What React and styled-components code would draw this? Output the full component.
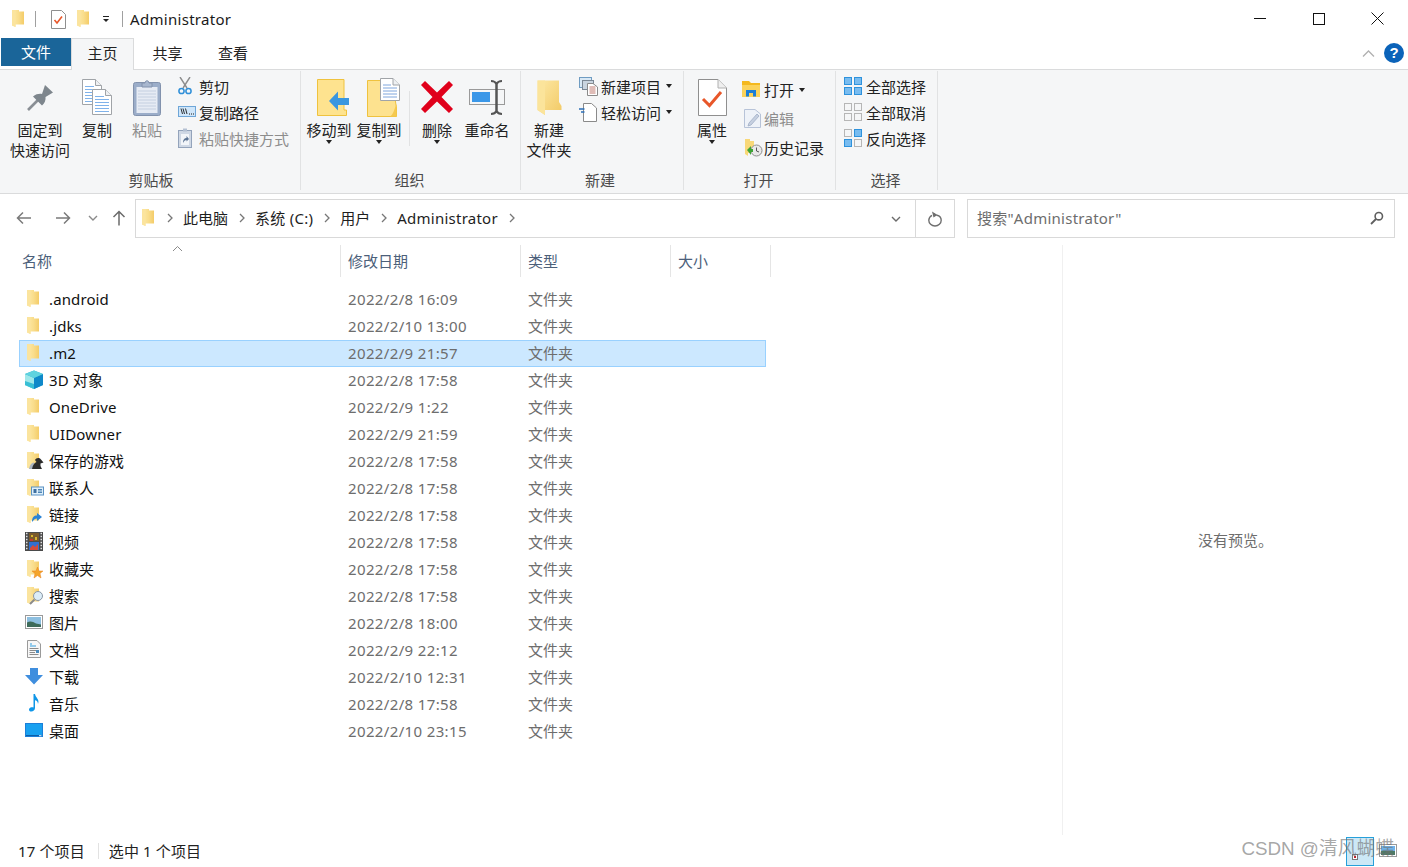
import React, { useId } from "react";
import styled, { createGlobalStyle } from "styled-components";

const Global = createGlobalStyle`
  html, body { margin: 0; padding: 0; background: #fff; overflow: hidden; }
  body { font-family: "Noto Sans", "Noto Sans CJK SC", sans-serif; font-size: 15px; color: #000; }
  * { box-sizing: border-box; }
`;

const Win = styled.div`
  width: 1408px; height: 867px; display: flex; flex-direction: column; position: relative; overflow: hidden; background: #fff;
`;

/* title bar */
const TitleBar = styled.header`height: 38px; display: flex; align-items: center; padding: 0 1px 0 10px;`;
const QuickIcon = styled.span`display: flex; width: ${p => p.$w}px; margin-left: ${p => p.$ml || 0}px; justify-content: center;`;
const TitleSep = styled.i`width: 1px; height: 16px; background: #a0a0a0; margin: 0 ${p => p.$r}px 0 ${p => p.$l}px;`;
const TitleText = styled.span`font-size: 15px; line-height: 20px; flex: 1; color: #1a1a1a; letter-spacing: .3px;`;
const WinBtn = styled.button`
  width: 59px; height: 38px; border: 0; background: none; padding: 0; display: flex; align-items: center; justify-content: center; margin-top: -1px;
`;

/* tabs */
const TabBar = styled.nav`height: 32px; display: flex; align-items: flex-start; padding-left: 1px; position: relative; border-bottom: 1px solid #dadbdc;`;
const FileTab = styled.div`width: 70px; height: 28px; background: #1a6599; color: #fff; display: flex; align-items: center; justify-content: center; font-size: 15px; padding-bottom: 2px;`;
const Tab = styled.div`
  width: ${p => p.$w}px; height: ${p => p.$active ? 32 : 30}px; display: flex; align-items: center; justify-content: center; font-size: 15px; padding-bottom: ${p => p.$active ? 4 : 2}px; color: #222;
  ${p => p.$active && `background: #f5f6f7; border: 1px solid #dadbdc; border-bottom: 0; position: relative; z-index: 1;`}
`;
const TabRight = styled.div`margin-left: auto; display: flex; align-items: center; gap: 9px; padding-right: 4px; height: 30px;`;
const Help = styled.span`
  width: 20px; height: 20px; border-radius: 50%; background: #0b63b9; color: #fff; font: bold 15px/20px "Liberation Sans", sans-serif; text-align: center;
`;

/* ribbon */
const Ribbon = styled.section`height: 124px; display: flex; background: #f5f6f7; border-bottom: 1px solid #dadbdc;`;
const Group = styled.div`
  width: ${p => p.$w}px; height: 119px; margin-top: 1px; border-right: 1px solid #e1e2e3; display: flex; flex-direction: column;
`;
const GroupBody = styled.div`flex: 1; display: flex; padding-left: ${p => p.$pl}px; align-items: flex-start; min-height: 0;`;
const GroupLabel = styled.div`
  height: 20px; line-height: 20px; text-align: center; font-size: 15px; color: #4b4b4b; margin-top: auto;
  padding: 0 ${p => p.$pr || 0}px 0 ${p => p.$pl || 0}px;
`;
const Big = styled.div`
  width: ${p => p.$w}px; margin-left: ${p => p.$ml || 0}px; display: flex; flex-direction: column; align-items: center; padding-top: 7px;
  color: ${p => p.$off ? "#8d8d8d" : "#222"};
`;
const BigIcon = styled.div`height: 38px; display: flex; align-items: center; justify-content: center; padding-left: ${p => p.$shift || 0}px;`;
const BigText = styled.div`margin-top: 4px; font-size: 15px; line-height: 20px; text-align: center; white-space: nowrap;`;
const Caret = styled.i`
  display: block; width: 0; height: 0; border: 3.5px solid transparent; border-top: 4px solid #222; border-bottom: 0; margin: ${p => p.$inline ? "0 0 0 5px" : "0"};
`;
const VRule = styled.i`width: 1px; height: 55px; background: #e1e2e3; margin: 20px 0 0 ${p => p.$ml}px;`;
const SmallList = styled.div`display: flex; flex-direction: column; margin-left: ${p => p.$ml}px; padding-top: ${p => p.$pt ?? 2}px;`;
const SmallItem = styled.div`
  height: ${p => p.$h || 26}px; display: flex; align-items: center; white-space: nowrap; font-size: 15px; color: ${p => p.$off ? "#8d8d8d" : "#222"};
`;
const SmallIcon = styled.span`width: ${p => p.$w || 22}px; padding-left: ${p => p.$pl || 0}px; display: flex; flex: none;`;

/* nav */
const NavBar = styled.div`height: 51px; display: flex; align-items: flex-start; padding: 5px 13px 0 0;`;
const NavButtons = styled.div`width: 135px; height: 38px; display: flex; align-items: center; padding-left: 16px; flex: none;`;
const NavBtn = styled.span`display: flex; margin-right: ${p => p.$mr}px;`;
const Address = styled.div`flex: 1; height: 39px; border: 1px solid #d9d9d9; display: flex; align-items: center; min-width: 0;`;
const Crumbs = styled.div`flex: 1; display: flex; align-items: center; padding: 0 0 2px 3px; color: #1e1e1e; font-size: 15px;`;
const Chev = styled.span`display: flex; margin: 0 ${p => p.$r ?? 10}px 0 ${p => p.$l ?? 11}px;`;
const Latin = styled.span`letter-spacing: .25px;`;
const AddrBtn = styled.span`width: ${p => p.$w}px; height: 37px; display: flex; align-items: center; justify-content: center; flex: none; ${p => p.$line && "border-left: 1px solid #d9d9d9;"}`;
const Search = styled.div`
  width: 428px; height: 39px; margin-left: 12px; border: 1px solid #d9d9d9; display: flex; align-items: center; justify-content: space-between; padding: 0 10px 2px 9px; color: #6d6d6d; font-size: 15px; flex: none; letter-spacing: .25px;
`;

/* main */
const Main = styled.main`height: 590px; display: flex;`;
const ListPane = styled.div`width: 1062px; flex: none; position: relative;`;
const ColHead = styled.div`height: 32px; margin-left: 19px; display: grid; grid-template-columns: 322px 180px 150px 100px; width: 752px;`;
const ColCell = styled.div`
  border-right: 1px solid #e5e5e5; padding: 6px 0 0 ${p => p.$pl || 7}px; font-size: 15px; line-height: 20px; color: #4c607a;
`;
const SortMark = styled.span`position: absolute; left: 172px; top: 0; display: flex;`;
const Rows = styled.div`padding-top: 9px; margin-left: 19px; width: 747px;`;
const Row = styled.div`
  height: 27px; display: grid; grid-template-columns: 329px 180px 1fr; align-items: center; padding-bottom: 2px; border: 1px solid ${p => p.$sel ? "#99d1ff" : "transparent"};
  background: ${p => p.$sel ? "#cce8ff" : "transparent"}; font-size: 15px;
`;
const NameCell = styled.div`display: flex; align-items: center; color: #111; padding-left: 4px; line-height: 20px; letter-spacing: ${p => p.$latin ? ".12px" : "0"};`;
const RowIcon = styled.span`width: 20px; height: 20px; display: flex; margin-right: 5px; flex: none; letter-spacing: 0;`;
const MetaCell = styled.div`color: #6d6d6d; line-height: 20px; font-size: 15px; margin-left: -1px; letter-spacing: ${p => p.$latin ? ".36px" : "0"};`;
const Preview = styled.aside`flex: 1; border-left: 1px solid #f0f0f0; display: flex; align-items: center; justify-content: center; color: #6d6d6d; font-size: 15px; padding-bottom: 2px;`;

/* status */
const Status = styled.footer`height: 32px; display: flex; align-items: center; padding-left: 18px; font-size: 15px; color: #222; position: relative;`;
const StatusText = styled.span`padding-bottom: 2px; letter-spacing: .12px;`;
const StatusSep = styled.i`width: 1px; height: 16px; background: #e2e2e2; margin: 0 10px 0 13px;`;
const ViewBtns = styled.div`margin-left: auto; display: flex; align-items: flex-start; margin-right: 11px; height: 32px; padding-top: 2px;`;
const ViewBtn = styled.span`
  width: ${p => p.$w}px; height: 29px; display: flex; align-items: flex-end; justify-content: flex-start; padding: 0 0 ${p => p.$pb}px ${p => p.$pl}px;
  ${p => p.$on && "background: #cce8f6; border: 1px solid #26a0da;"}
`;
const Watermark = styled.div`
  position: absolute; right: 14px; top: 837px; height: 24px; line-height: 24px; font-family: "Liberation Sans", "Noto Sans CJK SC", sans-serif; font-size: 18.8px; color: rgba(110,110,110,.62); white-space: nowrap;
`;

/* ---------- icons ---------- */
const Svg = ({ w, h, vb, children }) => <svg width={w} height={h} viewBox={vb || `0 0 ${w} ${h}`} fill="none" style={{ display: "block", flex: "none" }}>{children}</svg>;

const FolderShape = () => {
  const id = useId();
  return (<>
    <defs>
      <linearGradient id={id} x1="0" y1="0" x2="1" y2="0">
        <stop offset="0" stopColor="#fdeaa8" /><stop offset=".55" stopColor="#f9dd8c" /><stop offset="1" stopColor="#f4cc68" />
      </linearGradient>
    </defs>
    <path d="M3 1H10V2.5H15V15.5H6.5V18L3 16.5Z" fill={`url(#${id})`} />
    <path d="M3 1H6.5V18L3 16.5Z" fill="#fbe49e" />
  </>);
};
const Folder = ({ children }) => <Svg w={20} h={20}><FolderShape />{children}</Svg>;

const ListFolder = () => <Folder />;
const Cube = () => (
  <Svg w={20} h={20}>
    <path d="M10 0.5L19 4V15L10 19L1 15V4Z" fill="#2bb3d3" />
    <path d="M1 4L10 8V19L1 15Z" fill="#9fe8ea" />
    <path d="M10 8L19 4V15L10 19Z" fill="#0f88c9" />
    <path d="M10 .5L19 4L10 8L1 4Z" fill="#5fd3df" />
    <path d="M1 11L10 14V19L1 15Z" fill="#38bfd5" />
  </Svg>
);
const Games = () => (
  <Folder>
    <path d="M5 18C6 14 7 12 10 11.5L11 18Z" fill="#aab4c0" />
    <path d="M8 18C9 14 10 12 12.5 11L11 9C12 7 15 6 17 8.5L19.5 11.5L16.5 12.5V15L18 18Z" fill="#2b2b2b" />
  </Folder>
);
const Contacts = () => (
  <Folder>
    <rect x="7.5" y="9" width="12" height="8" fill="#dff0fb" stroke="#5b92c4" />
    <rect x="9.5" y="11" width="3" height="4" fill="#3e6fa0" />
    <path d="M14 11.5H18M14 13H18M14 14.5H18" stroke="#4d84b6" />
  </Folder>
);
const Links = () => (
  <Folder>
    <path d="M8 17C8 12 10 10.5 13 10.5V8L18 12L13 16V13.5C11 13.5 10 14.5 8 17Z" fill="#2b84d6" />
  </Folder>
);
const Film = () => (
  <Svg w={20} h={20}>
    <rect x="1" y="0" width="18" height="19" fill="#4a4a4a" />
    <path d="M2 1.5H3.5M2 4.5H3.5M2 7.5H3.5M2 10.5H3.5M2 13.5H3.5M2 16.5H3.5M16.5 1.5H18M16.5 4.5H18M16.5 7.5H18M16.5 10.5H18M16.5 13.5H18M16.5 16.5H18" stroke="#e0e0e0" strokeWidth="1.4" />
    <rect x="5" y="1" width="10" height="8" fill="#7a5a2c" />
    <path d="M7 3H9V5H7ZM11 5H13V8H11Z" fill="#d7b52e" /><path d="M6 7H9V9H6Z" fill="#c53b2c" />
    <rect x="5" y="10" width="10" height="8" fill="#2f6fd0" />
    <path d="M6 16L9 13L11 15L14 12V18H6Z" fill="#d24b3a" />
  </Svg>
);
const Favorites = () => (
  <Folder><path d="M13.5 8L15 12H19L16 14.5L17 19L13.5 16.5L10 19L11 14.5L8 12H12Z" fill="#f4a52b" stroke="#e88320" strokeWidth=".5" /></Folder>
);
const SearchFolder = () => (
  <Folder>
    <circle cx="14" cy="10" r="4.5" fill="#dcedf8" stroke="#8a97a5" />
    <path d="M10.5 13.5L6 18" stroke="#8b8b8b" strokeWidth="2" />
  </Folder>
);
const Picture = () => (
  <Svg w={20} h={20}>
    <rect x="1.5" y="2.5" width="17" height="13" fill="#fff" stroke="#9a9a9a" />
    <rect x="3" y="4" width="14" height="10" fill="#8dbfe0" />
    <path d="M3 9.5C6 7.5 9 8.5 12 10.5L17 11.5V14H3Z" fill="#3e6b5a" />
  </Svg>
);
const Doc = () => (
  <Svg w={20} h={20}>
    <path d="M3.5 .5H13L16.5 4V17.5H3.5Z" fill="#f7f7f7" stroke="#9a9a9a" />
    <path d="M6 4H8M6 6H12" stroke="#33a0e0" strokeWidth="1.2" />
    <path d="M5.5 8.5H14.5M5.5 10.5H14.5M5.5 12.5H11M5.5 14.5H14.5" stroke="#8b8b8b" />
    <path d="M12 10H15V13H12Z" fill="#4a8cc0" />
  </Svg>
);
const Download = () => (
  <Svg w={20} h={20}>
    <path d="M6 1H14V8H19L10 17.5L1 8H6Z" fill="#3f8ede" />
  </Svg>
);
const Music = () => (
  <Svg w={20} h={20}>
    <path d="M9.5 0H11C11.5 4 16 5 14 10C14 7.5 12.5 6.5 11 6.2V14C11 16.5 8.5 18 6.5 17.5C4.5 17 4.5 14.5 6.5 13.5C7.5 13 8.8 13 9.5 13.5Z" fill="#0f96e8" />
  </Svg>
);
const Desktop = () => (
  <Svg w={20} h={20}>
    <rect x="1" y="2" width="18" height="14" fill="#1c7fd8" />
    <rect x="2" y="3" width="16" height="11" fill="#19a1f0" />
    <path d="M2 14H18V15H2Z" fill="#0d5ea8" /><path d="M15 14.7H17.5" stroke="#e8f4ff" />
  </Svg>
);

const CheckDoc = ({ w = 15, h = 19 }) => (
  <Svg w={w} h={h} vb="0 0 15 19">
    <path d="M.5.5H10.5L14.5 4.5V18.5H.5Z" fill="#fff" stroke="#8f8f8f" />
    <path d="M3.5 10L6 13L11 6.5" stroke="#e8572a" strokeWidth="1.6" />
  </Svg>
);
const Drop = () => (
  <Svg w={8} h={8}>
    <path d="M1 1.5H7" stroke="#222" /><path d="M1 4H7L4 7Z" fill="#222" />
  </Svg>
);

const Pin = () => (
  <Svg w={26} h={27}>
    <path d="M1 26L11 16" stroke="#8a8f95" strokeWidth="2.6" />
    <path d="M6 12.5C9 10 12.5 9.5 15 10L18 1L26 8.5L18.5 13C19 16 17.5 19.5 15 21.5Z" fill="#7e868d" />
  </Svg>
);
const PageBlue = ({ x, y }) => (
  <g transform={`translate(${x} ${y})`}>
    <path d="M.5.5H13.5L19.5 6.5V25.5H.5Z" fill="#fff" stroke="#a0a4a8" />
    <path d="M13.5.5V6.5H19.5" fill="#eef0f2" stroke="#a0a4a8" />
    <path d="M3 7.5H12M3 10.5H17M3 13.5H17M3 16.5H17M3 19.5H17M3 22.5H17" stroke="#7fb2ea" />
  </g>
);
const Copy = () => <Svg w={31} h={37}><PageBlue x={0} y={0} /><PageBlue x={10} y={10} /></Svg>;
const Paste = () => (
  <Svg w={28} h={37}>
    <rect x=".5" y="3.5" width="27" height="33" rx="2" fill="#9badc9" stroke="#8292ad" />
    <rect x="3.5" y="8" width="21" height="26" fill="#e6ebf4" />
    <path d="M5 12H23M5 15H23M5 18H23M5 21H23M5 24H23M5 27H23M5 30H23" stroke="#c4cfe0" />
    <path d="M9 8V4H12C12 1 16 1 16 4H19V8Z" fill="#a8b7cf" stroke="#8292ad" />
  </Svg>
);
const Scissors = () => (
  <Svg w={14} h={18}>
    <path d="M2 0L9 11M12 0L5 11" stroke="#8d8d8d" strokeWidth="1.4" />
    <circle cx="3.5" cy="14" r="2.6" stroke="#2f8fd8" strokeWidth="1.5" />
    <circle cx="10.5" cy="14" r="2.6" stroke="#2f8fd8" strokeWidth="1.5" />
  </Svg>
);
const PathIcon = () => (
  <Svg w={18} h={12}>
    <rect x=".5" y=".5" width="17" height="10" fill="#cfe6fa" stroke="#6ea6d8" />
    <path d="M3 2.5L4.5 8M5 2.5L6.5 8M7.5 2.5L9 8" stroke="#1c1c1c" strokeWidth=".9" />
    <path d="M11 8H12M13 8H14M15 8H16" stroke="#1c1c1c" />
  </Svg>
);
const PasteShortcut = () => (
  <Svg w={14} h={20}>
    <rect x=".5" y="2.5" width="13" height="17" fill="#cfd8e5" stroke="#93a3bb" />
    <rect x="3" y="6" width="8" height="11" fill="#f2f5f9" />
    <path d="M5 0.5H9V3.5H5Z" fill="#b4c1d3" />
    <path d="M5 15C5 11 7 10 8.5 10V8L11 11L8.5 13.5V12C7 12 6 13 5 15Z" fill="#5d7595" />
  </Svg>
);
const MoveTo = () => (
  <Svg w={33} h={37}>
    <path d="M.5.5H27V31H29.5V36.5H.5Z" fill="#fee38f" stroke="#efc23e" />
    <path d="M32 19H21V12.5L12 22L21 31.5V26H32Z" fill="#3a97e0" />
  </Svg>
);
const CopyTo = () => (
  <Svg w={33} h={39}>
    <path d="M.5 2.5H25L29.5 30V38.5H.5Z" fill="#fde28f" stroke="#efc23e" />
    <path d="M29.5 26V38.5H23C26 37 27 32 29.5 26Z" fill="#f5c94f" />
    <g transform="translate(13 0)">
      <path d="M.5.5H13L19.5 7V22.5H.5Z" fill="#fff" stroke="#a0a4a8" />
      <path d="M13 .5V7H19.5" fill="#eef0f2" stroke="#a0a4a8" />
      <path d="M3 7H11M3 10H17M3 13H17M3 16H17M3 19H17" stroke="#7fa6dd" />
    </g>
  </Svg>
);
const Delete = () => (
  <Svg w={32} h={32}>
    <path d="M4 0L16 11.5L28 0L32 4L20.5 16L32 28L28 32L16 20.5L4 32L0 28L11.5 16L0 4Z" fill="#e0001b" />
  </Svg>
);
const Rename = () => (
  <Svg w={36} h={35}>
    <rect x=".5" y="9.5" width="35" height="15" fill="#f5f6f7" stroke="#9a9a9a" />
    <rect x="3" y="12" width="18" height="10" fill="#3a97e8" />
    <path d="M22 1C25 1 26.5 2 27.5 4V31C26.5 33 25 34 22 34M33 1C30 1 28.5 2 27.5 4M27.5 31C28.5 33 30 34 33 34" stroke="#555" strokeWidth="2" />
    <path d="M27.5 3V32" stroke="#555" strokeWidth="2" />
  </Svg>
);
const NewFolder = () => {
  const id = useId();
  return (
    <Svg w={25} h={35}>
      <defs><linearGradient id={id} x1="0" y1="0" x2="1" y2="1"><stop offset="0" stopColor="#fde9a6" /><stop offset="1" stopColor="#f2c964" /></linearGradient></defs>
      <path d="M.5 .5H22V22L24.5 26V30H8V35L.5 30Z" fill={`url(#${id})`} />
      <path d="M.5 .5H8V35L.5 30Z" fill="#fbe49b" />
    </Svg>
  );
};
const NewItem = () => (
  <Svg w={19} h={19}>
    <rect x=".5" y=".5" width="12" height="10" fill="#d8e8f5" stroke="#6f9cc2" />
    <rect x="3.5" y="3.5" width="11" height="9" fill="#c9d4df" stroke="#7b8794" />
    <path d="M8.5 6.5H14L18.5 10V18.5H8.5Z" fill="#fff" stroke="#8a8a8a" />
    <path d="M10.5 10H16.5M10.5 12H16.5M10.5 14H16.5M10.5 16H16.5" stroke="#c07a70" />
  </Svg>
);
const EasyAccess = () => (
  <Svg w={18} h={19}>
    <path d="M4.5.5H12.5L17.5 5V18.5H4.5Z" fill="#fff" stroke="#8a8a8a" />
    <path d="M0 6H5.5M2 9H5.5" stroke="#2b6fb8" strokeWidth="1.3" />
  </Svg>
);
const Props = () => (
  <Svg w={29} h={37}>
    <path d="M.5.5H20L28.5 9V36.5H.5Z" fill="#fff" stroke="#8f8f8f" />
    <path d="M20 .5V9H28.5" fill="#efefef" stroke="#b0b0b0" />
    <path d="M5 20L11.5 26.5L23 13" stroke="#e8572a" strokeWidth="3" />
  </Svg>
);
const OpenIcon = () => (
  <Svg w={18} h={17}>
    <path d="M0 0H7L9 2H18V16H0Z" fill="#f4b81e" />
    <path d="M0 4H18V16H0Z" fill="#fbd25a" />
    <path d="M4 15.5V9H14V15.5H11V12H7V15.5Z" fill="#1c7ed6" />
  </Svg>
);
const Edit = () => (
  <Svg w={17} h={19}>
    <path d="M.5.5H11L16.5 5V18.5H.5Z" fill="#eef2f8" stroke="#b7c3d8" />
    <path d="M13 5L5 14L4 17L7 16L15 7Z" fill="#c6d0e0" stroke="#9fadc5" strokeWidth=".8" />
  </Svg>
);
const History = () => (
  <Svg w={19} h={19}>
    <path d="M1 1H6V3H10V15H4V18L1 16Z" fill="#f8d878" />
    <circle cx="12.5" cy="12.5" r="5.5" fill="#e9e9e9" stroke="#8e8e8e" />
    <path d="M12.5 9.5V13L15 14" stroke="#555" />
    <path d="M3 12L7 8V11H9V14H7V17Z" fill="#3ea336" />
  </Svg>
);
const Panes = ({ on = [true, true, true, true] }) => {
  const pos = [[0, 0], [10, 0], [0, 10], [10, 10]];
  return (
    <Svg w={18} h={18}>
      {pos.map(([x, y], i) => (
        <rect key={i} x={x + .5} y={y + .5} width="7" height="7" fill={on[i] ? "#78bcf0" : "#f5f6f7"} stroke={on[i] ? "#2e92dc" : "#b6b6b6"} />
      ))}
    </Svg>
  );
};

const ArrowLeft = ({ flip, c = "#7a7a7a" }) => (
  <Svg w={16} h={14}>
    <path d={flip ? "M1 7H14.5M9 1.5L14.5 7L9 12.5" : "M15 7H1.5M7 1.5L1.5 7L7 12.5"} stroke={c} strokeWidth="1.5" />
  </Svg>
);
const ArrowUp = () => (
  <Svg w={14} h={16}>
    <path d="M7 15.5V1.5M1.5 7L7 1.5L12.5 7" stroke="#6b6b6b" strokeWidth="1.5" />
  </Svg>
);
const ChevDown = ({ c = "#7a7a7a" }) => <Svg w={10} h={6}><path d="M1 1L5 5L9 1" stroke={c} strokeWidth="1.4" /></Svg>;
const ChevRight = () => <Svg w={6} h={10}><path d="M1 1L5 5L1 9" stroke="#777" strokeWidth="1.3" /></Svg>;
const Refresh = () => (
  <Svg w={14} h={16}>
    <path d="M5.5 2.5L8.5 4.5M4 4.3C1.8 5.5.8 7.5.8 9.3C.8 12.5 3.5 15 7 15C10.5 15 13.2 12.5 13.2 9.3C13.2 6.8 11.5 4.8 9 4.2" stroke="#6f6f6f" strokeWidth="1.4" />
    <path d="M4 0.5L9.5 4L5.5 6.5Z" fill="#6f6f6f" />
  </Svg>
);
const Magnifier = () => (
  <Svg w={14} h={14}>
    <circle cx="8.8" cy="5.2" r="3.7" stroke="#5f5f5f" strokeWidth="1.6" />
    <path d="M6 8L1 13" stroke="#5f5f5f" strokeWidth="1.8" />
  </Svg>
);

const files = [
  [".android", "2022/2/8 16:09", ListFolder],
  [".jdks", "2022/2/10 13:00", ListFolder],
  [".m2", "2022/2/9 21:57", ListFolder, true],
  ["3D 对象", "2022/2/8 17:58", Cube],
  ["OneDrive", "2022/2/9 1:22", ListFolder],
  ["UIDowner", "2022/2/9 21:59", ListFolder],
  ["保存的游戏", "2022/2/8 17:58", Games],
  ["联系人", "2022/2/8 17:58", Contacts],
  ["链接", "2022/2/8 17:58", Links],
  ["视频", "2022/2/8 17:58", Film],
  ["收藏夹", "2022/2/8 17:58", Favorites],
  ["搜索", "2022/2/8 17:58", SearchFolder],
  ["图片", "2022/2/8 18:00", Picture],
  ["文档", "2022/2/9 22:12", Doc],
  ["下载", "2022/2/10 12:31", Download],
  ["音乐", "2022/2/8 17:58", Music],
  ["桌面", "2022/2/10 23:15", Desktop],
];

export default function App() {
  return (
    <Win>
      <Global />
      <TitleBar>
        <QuickIcon $w={17}><Folder /></QuickIcon>
        <TitleSep $l={8} $r={13} />
        <QuickIcon $w={18}><CheckDoc /></QuickIcon>
        <QuickIcon $w={28} $ml={3}><Folder /></QuickIcon>
        <QuickIcon $w={17} $ml={-1}><Drop /></QuickIcon>
        <TitleSep $l={8} $r={7} />
        <TitleText>Administrator</TitleText>
        <WinBtn aria-label="最小化"><Svg w={12} h={1}><rect width="12" height="1" fill="#111" /></Svg></WinBtn>
        <WinBtn aria-label="最大化"><Svg w={12} h={12}><rect x=".5" y=".5" width="11" height="11" stroke="#111" /></Svg></WinBtn>
        <WinBtn aria-label="关闭"><Svg w={13} h={13}><path d="M.5.5L12.5 12.5M12.5.5L.5 12.5" stroke="#111" /></Svg></WinBtn>
      </TitleBar>

      <TabBar>
        <FileTab>文件</FileTab>
        <Tab $w={63} $active>主页</Tab>
        <Tab $w={67}>共享</Tab>
        <Tab $w={64}>查看</Tab>
        <TabRight>
          <Svg w={13} h={7}><path d="M1 6.5L6.5 1L12 6.5" stroke="#b0b0b0" strokeWidth="1.3" /></Svg>
          <Help>?</Help>
        </TabRight>
      </TabBar>

      <Ribbon>
        <Group $w={301}>
          <GroupBody $pl={10}>
            <Big $w={60}><BigIcon><Pin /></BigIcon><BigText>固定到<br />快速访问</BigText></Big>
            <Big $w={50} $ml={2}><BigIcon><Copy /></BigIcon><BigText>复制</BigText></Big>
            <Big $w={50} $off><BigIcon><Paste /></BigIcon><BigText>粘贴</BigText></Big>
            <SmallList $ml={6}>
              <SmallItem><SmallIcon $w={21}><Scissors /></SmallIcon>剪切</SmallItem>
              <SmallItem><SmallIcon $w={21}><PathIcon /></SmallIcon>复制路径</SmallItem>
              <SmallItem $off><SmallIcon $w={21}><PasteShortcut /></SmallIcon>粘贴快捷方式</SmallItem>
            </SmallList>
          </GroupBody>
          <GroupLabel $pl={2}>剪贴板</GroupLabel>
        </Group>

        <Group $w={220}>
          <GroupBody $pl={3}>
            <Big $w={50}><BigIcon $shift={8}><MoveTo /></BigIcon><BigText>移动到</BigText><Caret /></Big>
            <Big $w={50}><BigIcon $shift={8}><CopyTo /></BigIcon><BigText>复制到</BigText><Caret /></Big>
            <VRule $ml={5} />
            <Big $w={50} $ml={2}><BigIcon><Delete /></BigIcon><BigText>删除</BigText><Caret /></Big>
            <Big $w={50}><BigIcon><Rename /></BigIcon><BigText>重命名</BigText></Big>
          </GroupBody>
          <GroupLabel $pr={2}>组织</GroupLabel>
        </Group>

        <Group $w={163}>
          <GroupBody $pl={3}>
            <Big $w={50}><BigIcon><NewFolder /></BigIcon><BigText>新建<br />文件夹</BigText></Big>
            <SmallList $ml={5}>
              <SmallItem><SmallIcon><NewItem /></SmallIcon>新建项目<Caret $inline /></SmallItem>
              <SmallItem><SmallIcon><EasyAccess /></SmallIcon>轻松访问<Caret $inline /></SmallItem>
            </SmallList>
          </GroupBody>
          <GroupLabel $pr={4}>新建</GroupLabel>
        </Group>

        <Group $w={152}>
          <GroupBody $pl={3}>
            <Big $w={50}><BigIcon><Props /></BigIcon><BigText>属性</BigText><Caret /></Big>
            <SmallList $ml={5} $pt={4}>
              <SmallItem $h={29}><SmallIcon><OpenIcon /></SmallIcon>打开<Caret $inline /></SmallItem>
              <SmallItem $h={29} $off><SmallIcon $pl={2}><Edit /></SmallIcon>编辑</SmallItem>
              <SmallItem $h={29}><SmallIcon $pl={2}><History /></SmallIcon>历史记录</SmallItem>
            </SmallList>
          </GroupBody>
          <GroupLabel $pr={2}>打开</GroupLabel>
        </Group>

        <Group $w={102}>
          <GroupBody $pl={8}>
            <SmallList>
              <SmallItem><SmallIcon><Panes /></SmallIcon>全部选择</SmallItem>
              <SmallItem><SmallIcon><Panes on={[false, false, false, false]} /></SmallIcon>全部取消</SmallItem>
              <SmallItem><SmallIcon><Panes on={[false, true, true, false]} /></SmallIcon>反向选择</SmallItem>
            </SmallList>
          </GroupBody>
          <GroupLabel $pr={2}>选择</GroupLabel>
        </Group>
      </Ribbon>

      <NavBar>
        <NavButtons>
          <NavBtn $mr={23}><ArrowLeft /></NavBtn>
          <NavBtn $mr={17}><ArrowLeft flip /></NavBtn>
          <NavBtn $mr={14}><ChevDown c="#8a8a8a" /></NavBtn>
          <NavBtn $mr={0}><ArrowUp /></NavBtn>
        </NavButtons>
        <Address>
          <Crumbs>
            <Svg w={20} h={20}><FolderShape /></Svg>
            <Chev $l={8} $r={10}><ChevRight /></Chev>此电脑
            <Chev><ChevRight /></Chev><Latin>系统 (C:)</Latin>
            <Chev><ChevRight /></Chev>用户
            <Chev><ChevRight /></Chev><Latin>Administrator</Latin>
            <Chev><ChevRight /></Chev>
          </Crumbs>
          <AddrBtn $w={38}><ChevDown c="#6b6b6b" /></AddrBtn>
          <AddrBtn $w={39} $line><Refresh /></AddrBtn>
        </Address>
        <Search>
          <span>搜索"Administrator"</span>
          <Magnifier />
        </Search>
      </NavBar>

      <Main>
        <ListPane>
          <SortMark><Svg w={11} h={7}><path d="M1 6L5.5 1.5L10 6" stroke="#8a8a8a" /></Svg></SortMark>
          <ColHead>
            <ColCell $pl={3}>名称</ColCell>
            <ColCell>修改日期</ColCell>
            <ColCell>类型</ColCell>
            <ColCell>大小</ColCell>
          </ColHead>
          <Rows>
            {files.map(([name, date, Icon, sel]) => (
              <Row key={name} $sel={sel}>
                <NameCell $latin={/[A-Za-z]/.test(name)}><RowIcon><Icon /></RowIcon>{name}</NameCell>
                <MetaCell $latin>{date}</MetaCell>
                <MetaCell>文件夹</MetaCell>
              </Row>
            ))}
          </Rows>
        </ListPane>
        <Preview>没有预览。</Preview>
      </Main>

      <Status>
        <StatusText>17 个项目</StatusText>
        <StatusSep />
        <StatusText>选中 1 个项目</StatusText>
        <ViewBtns>
          <ViewBtn $on $w={28} $pl={5} $pb={5}><Svg w={6} h={6}><rect x=".5" y=".5" width="5" height="5" fill="#fff" stroke="#777" /><rect x="2" y="2" width="2" height="2" fill="#c0202a" /></Svg></ViewBtn>
          <ViewBtn $w={23} $pl={5} $pb={9}><Svg w={18} h={13}><rect x=".5" y=".5" width="17" height="12" fill="#fff" stroke="#9a9a9a" /><rect x="2" y="2" width="14" height="5" fill="#6fb4ea" /><rect x="2" y="7" width="14" height="4" fill="#4d7a66" /></Svg></ViewBtn>
        </ViewBtns>
      </Status>
      <Watermark>CSDN @清风蝴蝶</Watermark>
    </Win>
  );
}
